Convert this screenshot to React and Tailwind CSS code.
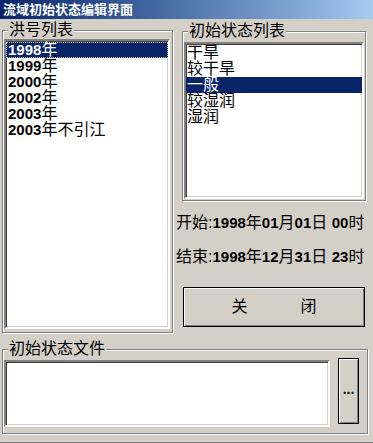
import React from "react";

const F = "font-['Liberation_Sans','Noto_Sans_CJK_SC',sans-serif]";

function Group({ label, className, children }) {
  return (
    <div className={`relative border border-[#808080] shadow-[inset_1px_1px_0_#ffffff,1px_1px_0_#ffffff] ${className}`}>
      <span className={`absolute -top-[10px] left-[5px] bg-[#d4d0c8] px-[1px] text-[16px] leading-[18px] text-black ${F}`}>
        {label}
      </span>
      {children}
    </div>
  );
}

function Sunken({ className, children }) {
  return (
    <div
      className={`border-2 border-t-[#808080] border-l-[#808080] border-b-white border-r-white bg-white shadow-[inset_1px_1px_0_#404040,inset_-1px_-1px_0_#d4d0c8] ${className}`}
    >
      {children}
    </div>
  );
}

const B = ({ children }) => <span className="font-bold text-[15px]">{children}</span>;

export default function App() {
  const floods = [
    ["1998", "年", true],
    ["1999", "年"],
    ["2000", "年"],
    ["2002", "年"],
    ["2003", "年"],
    ["2003", "年不引江"],
  ];
  const states = ["干旱", "较干旱", "一般", "较湿润", "湿润"];
  return (
    <div className={`flex h-[443px] w-[373px] flex-col overflow-hidden border-b border-b-[#808080] bg-[#d4d0c8] ${F}`}>
      <div className="flex h-[19px] shrink-0 items-center bg-gradient-to-r from-[#0a246a] to-[#a6caf0] pl-[3px]">
        <span className="text-[13px] font-bold leading-[19px] tracking-[0px] text-white">流域初始状态编辑界面</span>
      </div>

      <div className="flex px-[2px]">
        <Group label="洪号列表" className="mt-[11px] h-[303px] w-[171px] shrink-0">
          <Sunken className="ml-[1px] mt-[8px] h-[290px] w-[166px] pt-[1px]">
            {floods.map(([n, s, sel], i) => (
              <div
                key={i}
                className={`flex h-4 items-center whitespace-nowrap pl-[1px] text-[16px] leading-4 ${
                  sel ? "border border-dotted border-[#c8c890] bg-[#0a246a] text-white" : "border border-transparent text-black"
                }`}
              >
                <B>{n}</B>
                <span>{s}</span>
              </div>
            ))}
          </Sunken>
        </Group>

        <div className="ml-[3px] flex flex-col">
          <Group label="初始状态列表" className="ml-[6px] mt-[12px] h-[170px] w-[184px]">
            <Sunken className="ml-[1px] mt-[10px] h-[157px] w-[180px] pt-[1px]">
              {states.map((s, i) => (
                <div
                  key={i}
                  className={`h-4 pl-[1px] text-[16px] leading-4 ${
                    i === 2 ? "bg-[#0a246a] text-white" : "text-black"
                  }`}
                >
                  {s}
                </div>
              ))}
            </Sunken>
          </Group>

          <div className="mt-[14px] whitespace-nowrap text-[16px] leading-4 text-black">
            开始:<B>1998</B>年<B>01</B>月<B>01</B>日 <B>00</B>时
          </div>
          <div className="mt-[18px] whitespace-nowrap text-[16px] leading-4 text-black">
            结束:<B>1998</B>年<B>12</B>月<B>31</B>日 <B>23</B>时
          </div>

          <div className="ml-[7px] mt-[22px] flex h-[40px] w-[182px] items-center justify-center gap-[53px] border border-black text-[16px] text-black shadow-[inset_1px_1px_0_#ffffff,inset_-1px_-1px_0_#808080]">
            <span>关</span>
            <span>闭</span>
          </div>
        </div>
      </div>

      <div className="px-[2px]">
        <Group label="初始状态文件" className="mt-[16px] h-[85px] w-[366px]">
          <div className="flex items-start">
            <Sunken className="ml-[1px] mt-[10px] h-[67px] w-[326px]" />
            <div className="ml-[8px] mt-[8px] flex h-[66px] w-[21px] items-center justify-center border border-black pb-[4px] text-[14px] font-bold text-black shadow-[inset_1px_1px_0_#ffffff,inset_-1px_-1px_0_#808080]">
              ...
            </div>
          </div>
        </Group>
      </div>
    </div>
  );
}
